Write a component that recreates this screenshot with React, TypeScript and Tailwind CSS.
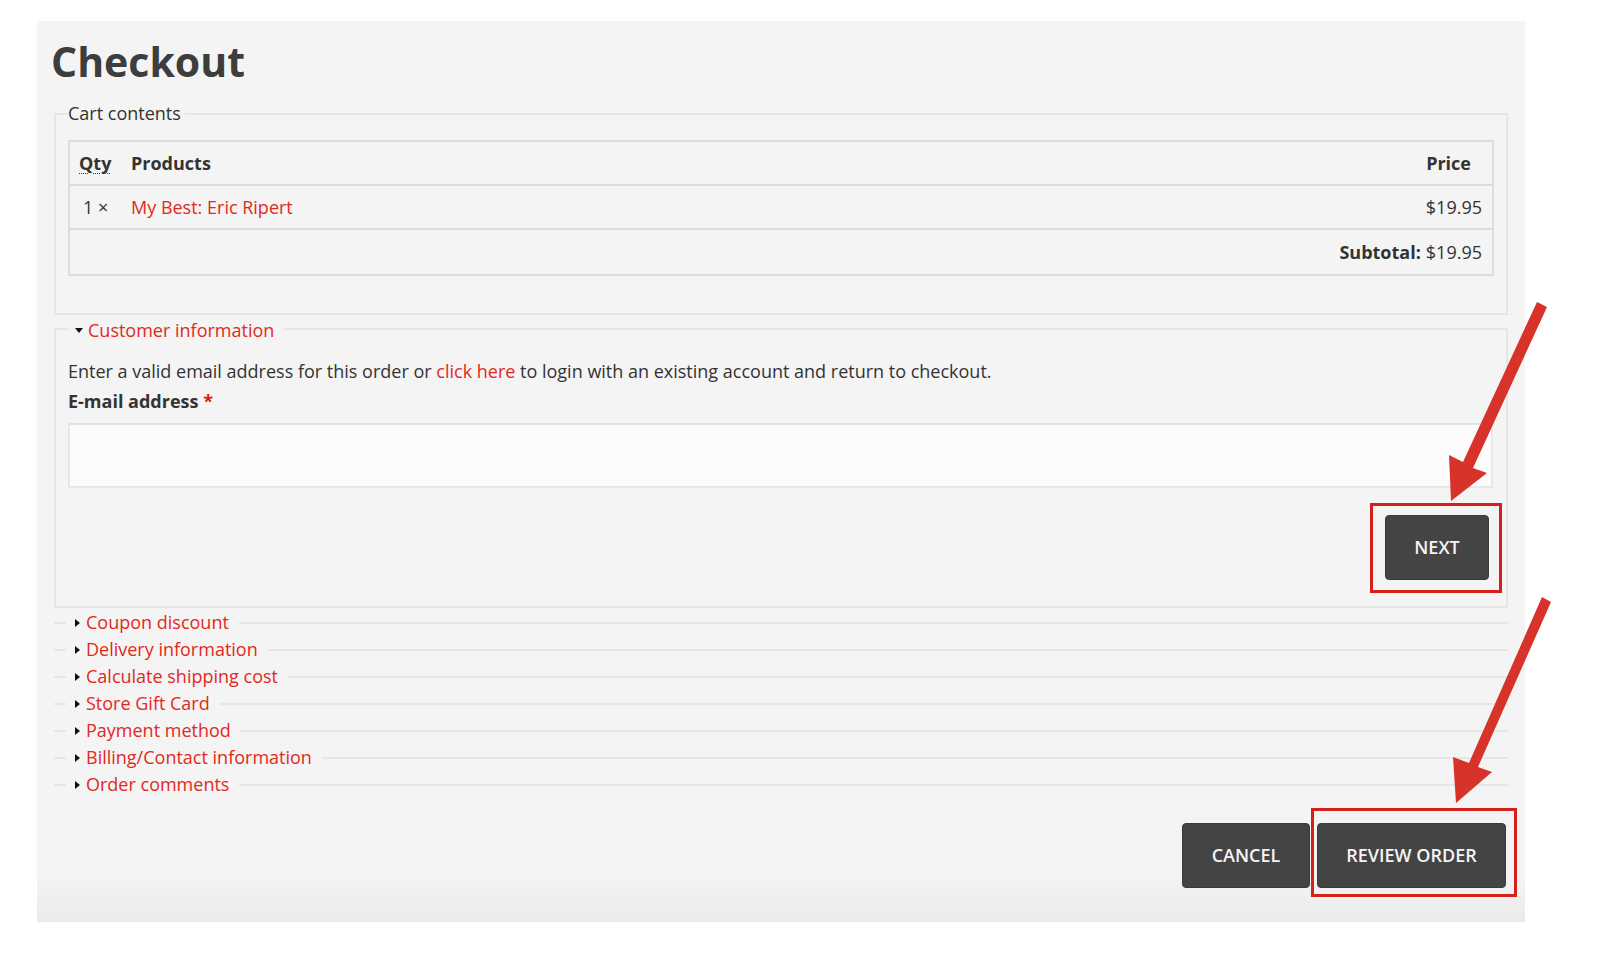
import React from "react";

const collapsed = [
  "Coupon discount",
  "Delivery information",
  "Calculate shipping cost",
  "Store Gift Card",
  "Payment method",
  "Billing/Contact information",
  "Order comments",
];

function TriRight() {
  return (
    <svg width="5" height="8" viewBox="0 0 5 8" className="shrink-0">
      <polygon points="0,0 5,4 0,8" fill="#111" />
    </svg>
  );
}

function TriDown() {
  return (
    <svg width="8" height="5" viewBox="0 0 8 5" className="shrink-0">
      <polygon points="0,0 8,0 4,5" fill="#111" />
    </svg>
  );
}

function DarkButton({ label, className }: { label: string; className: string }) {
  return (
    <button
      type="button"
      className={`flex h-[65px] items-center justify-center rounded-[4px] border border-[#3a3a3a] bg-[#444] text-[18px] font-semibold text-[#f4f4f4] ${className}`}
    >
      {label}
    </button>
  );
}

export default function App() {
  return (
    <div className="relative h-[961px] w-[1600px] overflow-hidden bg-white font-['Open_Sans',_'Liberation_Sans',_sans-serif] text-[18px] leading-[27px] text-[#333]">
      {/* Page panel */}
      <div className="ml-[37px] mt-[21px] h-[901px] w-[1488px] bg-[linear-gradient(to_bottom,#f4f4f4_95%,#eaeaea)] px-[17px] pt-[15px]">
        <h1 className="-ml-[3px] mb-[14px] text-[41px] font-bold leading-[50px] text-[#3d3d3d]">Checkout</h1>

        {/* Cart contents */}
        <fieldset className="border-2 border-[#e6e6e6] px-[12px] pb-[37px] pt-[13px]">
          <legend className="pl-0 pr-[4px] leading-[27px]">Cart contents</legend>
          <div className="border-2 border-[#dcdcdc]">
            <div className="flex h-[44px] items-center border-b-2 border-[#dcdcdc] font-bold">
              <span className="w-[61px] pl-[9px]">
                <abbr className="no-underline">
                  <span className="underline decoration-dotted decoration-1 underline-offset-[3px]">Qty</span>
                </abbr>
              </span>
              <span className="flex-1">Products</span>
              <span className="pr-[21px]">Price</span>
            </div>
            <div className="flex h-[44px] items-center border-b-2 border-[#dcdcdc]">
              <span className="w-[61px] pl-[13px]">1 ×</span>
              <span className="flex-1 text-[#e2291d]">My Best: Eric Ripert</span>
              <span className="pr-[10px]">$19.95</span>
            </div>
            <div className="flex h-[44px] items-center justify-end pr-[10px]">
              <span className="font-bold">Subtotal:</span>
              <span className="ml-[5px]">$19.95</span>
            </div>
          </div>
        </fieldset>

        {/* Customer information */}
        <fieldset className="-mt-[2px] border-2 border-[#e6e6e6] px-[12px] pb-[26px] pt-[14px]">
          <legend className="pl-[7px] pr-[10px]">
            <span className="inline-flex items-center gap-[5px] text-[#e2291d]">
              <TriDown />
              Customer information
            </span>
          </legend>
          <p>
            Enter a valid email address for this order or{" "}
            <span className="text-[#e2291d]">click here</span> to login with an existing account and
            return to checkout.
          </p>
          <label className="mt-[3px] block font-bold">
            E-mail address <span className="text-[#e8140c]">*</span>
          </label>
          <div className="mt-[8px] h-[65px] w-[1425px] border-2 border-[#e7e7e7] border-t-[#e2e2e2] bg-[#fcfcfc]" />
          <div className="mt-[27px] flex justify-end pr-[5px]">
            <div className="relative">
              <DarkButton label="NEXT" className="w-[104px]" />
              <span className="absolute bottom-[-13px] left-[-15px] right-[-13px] top-[-12px] border-[3px] border-[#d81f1c]" />
            </div>
          </div>
        </fieldset>

        {/* Collapsed sections */}
        <div className="mt-[1px]">
          {collapsed.map((s) => (
            <div key={s} className="flex h-[27px] items-center">
              <span className="h-[2px] w-[12px] bg-[#e6e6e6]" />
              <span className="flex items-center gap-[6px] pl-[9px] pr-[10px] text-[#e2291d]">
                <TriRight />
                {s}
              </span>
              <span className="h-[2px] flex-1 bg-[#e6e6e6]" />
            </div>
          ))}
        </div>

        {/* Actions */}
        <div className="mt-[25px] flex justify-end gap-[7px] pr-[2px]">
          <DarkButton label="CANCEL" className="w-[128px]" />
          <div className="relative">
            <DarkButton label="REVIEW ORDER" className="w-[189px]" />
            <span className="absolute bottom-[-9px] left-[-6px] right-[-11px] top-[-15px] border-[3px] border-[#d81f1c]" />
          </div>
        </div>
      </div>

      {/* Annotation arrows */}
      <svg className="pointer-events-none absolute left-0 top-0" width="1600" height="961">
        <polygon
          points="1537,302 1547,307 1473,468 1487,473 1451,501 1449,455 1463,462"
          fill="#d7332a"
        />
        <polygon
          points="1542,597 1551,602 1478,767 1492,772 1456,803 1453,757 1469,763"
          fill="#d7332a"
        />
      </svg>
    </div>
  );
}
